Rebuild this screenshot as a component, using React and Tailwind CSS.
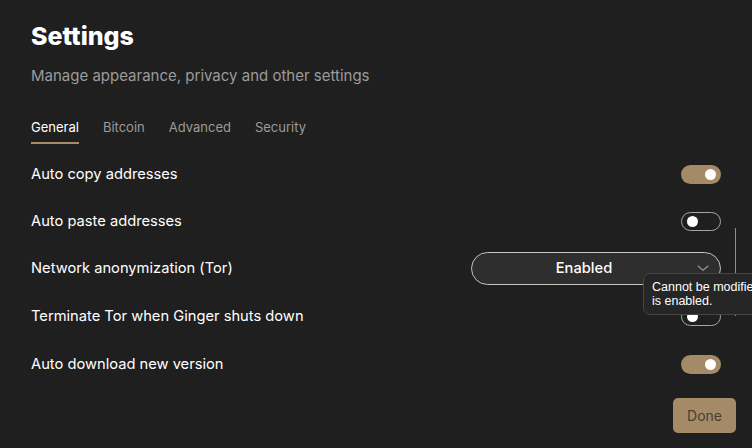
import React, { useState } from 'react';

const Toggle = ({ on }) => (
  <div
    className={`flex h-[19px] w-10 items-center rounded-full px-[5px] ${
      on ? 'justify-end bg-[#a48a67]' : 'justify-start border border-[#a5a5a5]'
    }`}
  >
    <div className="h-[11px] w-[11px] rounded-full bg-white" />
  </div>
);

const App = () => {
  const [tab] = useState('General');
  const tabs = ['General', 'Bitcoin', 'Advanced', 'Security'];

  return (
    <div className="relative h-[448px] w-[752px] overflow-hidden bg-[#1f1f1f] font-['Inter',sans-serif] text-white">
      <div className="flex h-full flex-col pl-[31px] pr-4">
        {/* Header */}
        <h1 className="mt-[20px] text-[25px] font-extrabold leading-[32px]">Settings</h1>
        <p className="mt-[14px] text-[15px] leading-5 text-[#9b9b9b]">
          Manage appearance, privacy and other settings
        </p>

        {/* Tabs */}
        <div className="mt-[32px] flex gap-[24px] text-[13px]">
          {tabs.map((t) => (
            <div key={t} className="flex flex-col">
              <span className={t === tab ? 'text-white' : 'text-[#9b9b9b]'}>{t}</span>
              <div className={`mt-[4px] h-[2px] ${t === tab ? 'bg-[#a48a67]' : ''}`} />
            </div>
          ))}
        </div>

        {/* Rows */}
        <div className="mt-[7px] flex">
          <div className="flex flex-1 flex-col text-[14.7px]">
            <div className="flex h-[47px] items-center justify-between">
              <span>Auto copy addresses</span>
              <Toggle on />
            </div>
            <div className="flex h-[47px] items-center justify-between">
              <span>Auto paste addresses</span>
              <Toggle />
            </div>
            <div className="flex h-[47px] items-center justify-between">
              <span>Network anonymization (Tor)</span>
              <div className="flex h-[33px] w-[250px] items-center rounded-full border border-[#c4c4c4] bg-[#2e2e2e] pl-[2px] pr-[8px]">
                <span className="flex-1 text-center font-medium">Enabled</span>
                <svg className="h-[18px] w-[18px] shrink-0" viewBox="0 0 24 24" fill="none">
                  <path d="M5 9l7 6 7-6" stroke="#9a9a9a" strokeWidth="1.4" />
                </svg>
              </div>
            </div>
            <div className="flex h-[49px] items-center justify-between">
              <span>Terminate Tor when Ginger shuts down</span>
              <Toggle />
            </div>
            <div className="flex h-[47px] items-center justify-between">
              <span>Auto download new version</span>
              <Toggle on />
            </div>
          </div>
          {/* Scrollbar */}
          <div className="ml-[14px] w-px">
            <div className="mt-[77px] h-[88px] bg-[#a48a67]" />
          </div>
        </div>

        <div className="mt-auto mb-[15px] flex justify-end">
          <button className="h-[35px] w-[63px] rounded-[5px] bg-[#a48a67] text-[14px] text-[#463e33]">
            Done
          </button>
        </div>
      </div>

      {/* Tooltip */}
      <div className="absolute left-[643px] top-[273px] w-[180px] rounded-[7px] border border-[#454545] bg-[#262626] px-2 py-[6px] font-['Liberation_Sans',sans-serif] text-[12.5px] leading-[14px] text-white">
        Cannot be modified while Tor
        <br />
        is enabled.
      </div>
    </div>
  );
};

export default App;
